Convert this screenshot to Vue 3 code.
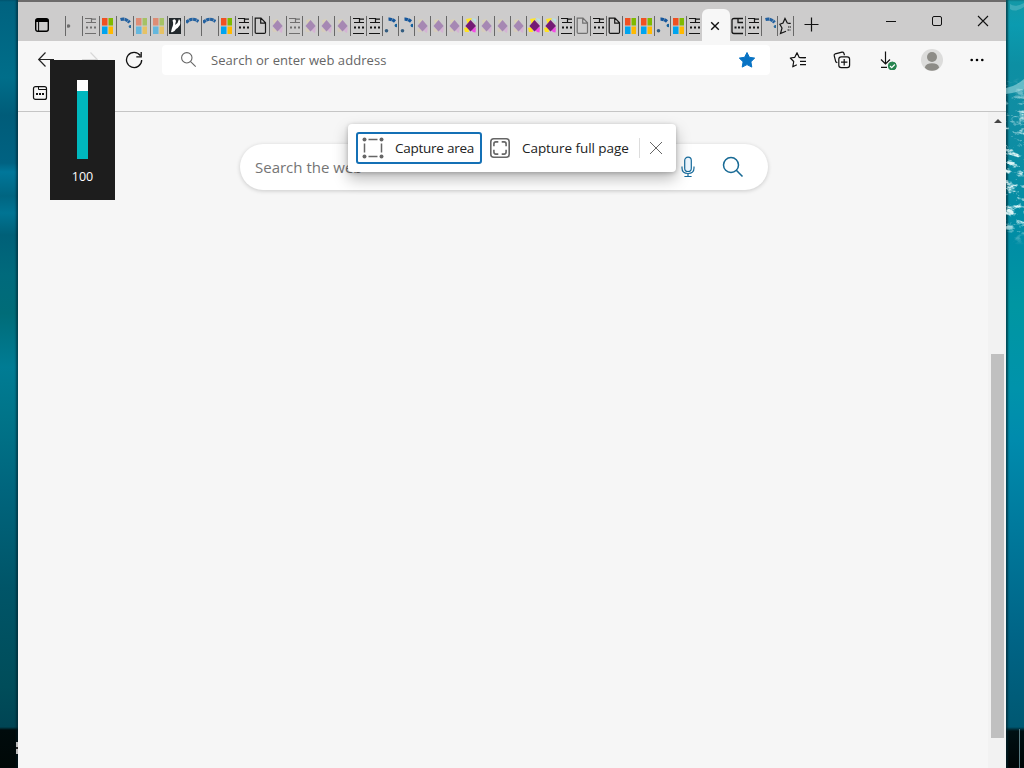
<script setup>
import { ref } from 'vue';

const volume = ref(100);
const searchText = ref('');

// kind + optional sleeping state, in strip order
const leftTabs = [
  ['speck', true], ['news', true], ['ms'], ['arcdot'], ['ms', true], ['ms', true], ['hand'],
  ['arc'], ['arc'], ['ms'], ['news'], ['page'], ['gemPale', true],
  ['news', true], ['gemPale', true], ['gemPale', true], ['gemPale', true], ['news'], ['news'],
  ['dots'], ['dots'], ['gemPale', true], ['gemPale', true], ['gemPale', true], ['gem'],
  ['gemPale', true], ['gemPale', true], ['gemPale', true], ['gem'], ['gem'], ['news'],
  ['page', true], ['news'], ['page'], ['ms'], ['ms'], ['dots'], ['ms'], ['news']
].map(([kind, asleep], i) => ({ kind, asleep: !!asleep, wide: i < 13 }));

const rightTabs = [
  { kind: 'panel', first: true },
  { kind: 'news' },
  { kind: 'arcdot' },
  { kind: 'star' }
];

const icons = {
  speck: '<circle cx="1.5" cy="10" r="1.8" fill="#111"/>',
  news: '<path d="M1 2.5H7.5V6.5H12M8 3.2H12M2 6.5H7M1 17.5H12" fill="none" stroke="#151515" stroke-width="1.2"/><path d="M2 11.5h2M6 11.5h2M10 11.5h2" stroke="#151515" stroke-width="2"/>',
  panel: '<path d="M12 2.5H3Q1 2.5 1 4.5V15.5Q1 17.5 3 17.5H12M7 2.5V6.5H12" fill="none" stroke="#151515" stroke-width="1.3"/><path d="M3.5 11.5h2M7 11.5h2M10.5 11.5h2" stroke="#151515" stroke-width="2"/>',
  ms: '<path d="M1 2H6.5V9.5H1z" fill="#f05022"/><path d="M7.5 2H12V9.5H7.5z" fill="#7fba00"/><path d="M1 10.5H6.5V18H1z" fill="#00a4ef"/><path d="M7.5 10.5H12V18H7.5z" fill="#ffb900"/>',
  arc: '<path d="M0 6.5Q6 .5 12.5 5.5" fill="none" stroke="#2361a0" stroke-width="3.2" stroke-dasharray="3.6 .4"/>',
  arcdot: '<path d="M2.5 3.5Q8 2 11.5 6.5" fill="none" stroke="#2361a0" stroke-width="3.2" stroke-dasharray="3.6 .4"/><circle cx="12.3" cy="10.5" r="1.6" fill="#2b6b9d"/>',
  dots: '<path d="M4.5 3.2Q8 3 11 5.5" fill="none" stroke="#15569b" stroke-width="3.2" stroke-dasharray="3.4 .4"/><circle cx="12.3" cy="9.5" r="1.7" fill="#17629d"/><circle cx="2.5" cy="14.7" r="1.8" fill="#345d80"/>',
  hand: '<path d="M0 2H12V18H0z" fill="#23292d"/><path d="M3.5 4.5Q6 2 7 5L6 9L8.5 7L10 3Q12 5 11 9Q9 12 7 13Q5 17 2 16L3 12Q5 8 3.5 4.5z" fill="#fff"/>',
  page: '<path d="M1.2 2.2H7L11.5 6.8V16.2Q11.5 17.4 10.3 17.4H2.4Q1.2 17.4 1.2 16.2zM6.7 2.2V7.1H11.5" fill="none" stroke="#171717" stroke-width="1.2"/>',
  gem: '<path d="M2 3L8 2L4 9z" fill="#ffe52c"/><path d="M0 12L4 11L5 16L1 16z" fill="#ffe321"/><path d="M7 14L12 11L11.5 16.5L9 16z" fill="#f24be5"/><path d="M8 2L12 3V7z" fill="#b3e4e6"/><path d="M6.5 4L12 10L6.5 15.5L1.4 10z" fill="#741b75"/>',
  gemPale: '<path d="M2 4L7 3L3 9z" fill="#e5d6a2"/><path d="M1 13L4 11L6 16L2 16z" fill="#e0cfae"/><path d="M7 13L12 11L11 17L9 16z" fill="#dc9bdc"/><path d="M6.5 4L11.7 10L6.5 15.5L1.5 10z" fill="#81479c"/>',
  star: '<path d="M11.5 7.4L8.3 7L6 2.4L4 7L.9 8.3L3 12L1.5 17.5L7 15.2" fill="none" stroke="#151515" stroke-width="1.2"/><path d="M9.5 7.5H12M9 11h3M8.5 14h3" stroke="#151515" stroke-width="1.1" stroke-dasharray="1.5 .5"/>'
};
</script>

<template>
  <div class="desktop">
    <div class="edge edge-left"><span class="task-glyph"></span></div>

    <div class="browser">
      <header class="tab-strip">
        <svg class="tab-actions" width="16" height="16" viewBox="0 0 16 16">
          <rect x="1.7" y="1.7" width="12.6" height="12.6" rx="2" fill="none" stroke="#000" stroke-width="1.4" />
          <path d="M2 2H14V5H2z" /><path d="M4.6 5V14" stroke="#000" />
        </svg>
        <div class="tabs">
          <div v-for="(tab, i) in leftTabs" :key="i" class="tab" :class="{ wide: tab.wide, asleep: tab.asleep }">
            <svg width="13" height="20" viewBox="0 0 13 20" v-html="icons[tab.kind]"></svg>
          </div>
        </div>
        <div class="tab-active">
          <svg width="10" height="10" viewBox="0 0 10 10"><path d="M1.2 1.2L8.8 8.8M8.8 1.2L1.2 8.8" stroke="#111" stroke-width="1.4" /></svg>
        </div>
        <div class="tabs tabs-after">
          <div v-for="(tab, i) in rightTabs" :key="i" class="tab" :class="{ first: tab.first }">
            <svg width="13" height="20" viewBox="0 0 13 20" v-html="icons[tab.kind]"></svg>
          </div>
          <div class="tab end"></div>
        </div>
        <svg class="new-tab" width="16" height="16" viewBox="0 0 16 16"><path d="M7.5 .5V14.5M.5 7.5H14.5" stroke="#111" stroke-width="1.2" /></svg>
        <div class="window-buttons">
          <svg width="12" height="12" viewBox="0 0 12 12"><path d="M1 6.5H11" stroke="#111" /></svg>
          <svg width="12" height="12" viewBox="0 0 12 12"><rect x="1.5" y="1.5" width="9" height="9" rx="1.5" fill="none" stroke="#111" /></svg>
          <svg width="12" height="12" viewBox="0 0 12 12"><path d="M1 1L11 11M11 1L1 11" stroke="#111" stroke-width="1.1" /></svg>
        </div>
      </header>

      <div class="toolbar">
        <div class="nav">
          <svg width="18" height="18" viewBox="0 0 18 18"><path d="M17 8.5H2M8.5 1.5L1.7 8.5L8.5 15.5" fill="none" stroke="#222" stroke-width="1.2" /></svg>
          <svg width="18" height="18" viewBox="0 0 18 18"><path d="M1 8.5H16M9.5 1.5L16.3 8.5L9.5 15.5" fill="none" stroke="#d8d8d8" stroke-width="1.2" /></svg>
          <svg width="18" height="18" viewBox="0 0 18 18"><path d="M15.3 4.5A7.6 7.6 0 1 0 16.7 9M16.2 1V5.8H11.3" fill="none" stroke="#111" stroke-width="1.3" /></svg>
        </div>
        <div class="address">
          <svg width="17" height="17" viewBox="0 0 17 17"><circle cx="6.8" cy="6.8" r="5.2" fill="none" stroke="#666" stroke-width="1.1" /><path d="M10.6 10.6L15.7 15.7" stroke="#666" stroke-width="1.1" /></svg>
          <span>Search or enter web address</span>
          <svg class="fav" width="18" height="18" viewBox="0 0 18 18"><path d="M9 1.5L11.4 6.3L16.7 7.1L12.9 10.8L13.8 16.1L9 13.6L4.2 16.1L5.1 10.8L1.3 7.1L6.6 6.3z" fill="#0873c4" stroke="#0873c4" stroke-linejoin="round" /></svg>
        </div>
        <div class="actions">
          <svg width="18" height="18" viewBox="0 0 18 18"><path d="M16.2 6.7L10.2 6.4L8 1.7L5.8 6.3L1.3 7L4.7 10.5L3.8 15.8L7.8 13.8" fill="none" stroke="#111" stroke-width="1.2" stroke-linejoin="round" /><path d="M10.5 6.7H17M11 10.3H17M11 13.7H17" stroke="#111" stroke-width="1.2" /></svg>
          <svg width="18" height="18" viewBox="0 0 18 18"><path d="M4.3 11.8L2.8 10.8L1.2 4.6Q.9 3.2 2.2 2.8L9 1.1Q10.3.8 10.8 2L11.5 4.2" fill="none" stroke="#111" stroke-width="1.2" /><rect x="5.8" y="5.8" width="10.8" height="10.8" rx="2.4" fill="none" stroke="#111" stroke-width="1.2" /><path d="M11.2 8V14.4M8 11.2H14.4" stroke="#111" stroke-width="1.2" /></svg>
          <svg width="20" height="20" viewBox="0 0 20 20"><path d="M8.5 1.5V14M4 9.5L8.5 14L13 9.5M4 17.3H10" fill="none" stroke="#111" stroke-width="1.2" /><circle cx="15.3" cy="16" r="4" fill="#278550" stroke="#278550" /><path d="M13 16L14.7 17.7L17.8 14.5" fill="none" stroke="#fff" stroke-width="1.2" /></svg>
          <svg width="22" height="22" viewBox="0 0 22 22"><circle cx="11" cy="11" r="11" fill="#dcdcdb" /><circle cx="11" cy="8" r="5" fill="#8d8c87" /><path d="M3.8 18.5Q5 14.3 11 14.3T18.2 18.5Q15.5 21.7 11 21.7T3.8 18.5z" fill="#8d8c87" /></svg>
          <svg width="16" height="16" viewBox="0 0 16 16"><circle cx="2.7" cy="8" r="1.3" /><circle cx="8" cy="8" r="1.3" /><circle cx="13.3" cy="8" r="1.3" /></svg>
        </div>
      </div>

      <div class="bookmarks">
        <svg width="16" height="16" viewBox="0 0 16 16"><rect x="1.5" y="1.6" width="13" height="12.8" rx="2" fill="none" stroke="#111" stroke-width="1.2" /><path d="M6.5 2V4.5H14.5" fill="none" stroke="#111" /><path d="M4 9h2M7 9h2M10 9h2" stroke="#111" stroke-width="2" /></svg>
      </div>

      <main class="page">
        <div class="search-box">
          <input v-model="searchText" type="text" placeholder="Search the web" />
          <svg class="mic" width="14" height="22" viewBox="0 0 14 22"><rect x="3.7" y="1.2" width="6.6" height="14.3" rx="3.3" fill="#edf7ff" stroke="#176b9c" stroke-width="1.2" /><path d="M1 10.5V12Q1 17.5 7 17.5T13 12V10.5M7 17.5V20.5M3.4 20.5H10.6" fill="none" stroke="#176b9c" stroke-width="1.2" /></svg>
          <svg class="lens" width="22" height="22" viewBox="0 0 22 22"><circle cx="9" cy="9" r="7.5" fill="none" stroke="#176994" stroke-width="1.5" /><path d="M14.3 14.3L20.5 20.5" stroke="#176994" stroke-width="1.6" /></svg>
        </div>
        <div class="scrollbar">
          <svg width="8" height="4" viewBox="0 0 8 4"><path d="M0 4L4 0L8 4z" fill="#444" /></svg>
          <div class="thumb"></div>
        </div>
      </main>
    </div>

    <div class="edge edge-right">
      <svg width="18" height="768" viewBox="0 0 18 768">
        <defs>
          <filter id="foam" x="0" y="0" width="1" height="1">
            <feTurbulence type="fractalNoise" baseFrequency=".1 .19" numOctaves="4" seed="6" />
            <feColorMatrix values="0 0 0 0 .72  0 0 0 0 .91  0 0 0 0 .92  4 2 0 0 -3.1" />
          </filter>
          <linearGradient id="fade" x2="0" y2="1">
            <stop offset="0" stop-color="#fff" stop-opacity="0" />
            <stop offset=".2" stop-color="#fff" stop-opacity=".8" />
            <stop offset=".5" stop-color="#fff" />
            <stop offset=".85" stop-color="#fff" />
            <stop offset="1" stop-color="#fff" stop-opacity="0" />
          </linearGradient>
          <mask id="surf"><rect y="75" width="18" height="170" fill="url(#fade)" /></mask>
        </defs>
        <path d="M0 88Q10 86 18 79V89Q10 93 0 94z" fill="#9fd8df" opacity=".6" />
        <path d="M4 4Q9 8 18 3V7Q9 13 4 9z" fill="#9fd8df" opacity=".3" />
        <g mask="url(#surf)"><rect width="18" height="245" filter="url(#foam)" /></g>
      </svg>
      <span class="show-desktop"></span>
    </div>

    <div class="capture">
      <button class="capture-button selected">
        <svg width="22" height="22" viewBox="0 0 22 22"><path d="M6.5 2.5H15.5M6.5 19.5H15.5M2.5 6.5V15.5M19.5 6.5V15.5" stroke="#666" stroke-width="1.5" /><g fill="#666"><circle cx="2.5" cy="2.5" r="2" /><circle cx="19.5" cy="2.5" r="2" /><circle cx="2.5" cy="19.5" r="2" /><circle cx="19.5" cy="19.5" r="2" /></g></svg>
        <span>Capture area</span>
      </button>
      <button class="capture-button full">
        <svg width="20" height="20" viewBox="0 0 20 20"><rect x=".8" y=".8" width="18.4" height="18.4" rx="3" fill="#fff" stroke="#666" stroke-width="1.6" /><path d="M3.9 8.3V5.9Q3.9 3.9 5.9 3.9H8.3M11.7 3.9H14.1Q16.1 3.9 16.1 5.9V8.3M16.1 11.7V14.1Q16.1 16.1 14.1 16.1H11.7M8.3 16.1H5.9Q3.9 16.1 3.9 14.1V11.7" fill="none" stroke="#666" stroke-width="1.6" /></svg>
        <span>Capture full page</span>
      </button>
      <span class="divider"></span>
      <svg class="dismiss" width="14" height="14" viewBox="0 0 14 14"><path d="M1 1L13 13M13 1L1 13" stroke="#666" /></svg>
    </div>

    <div class="volume">
      <div class="volume-track"><span></span></div>
      <div class="volume-value">{{ volume }}</div>
    </div>
  </div>
</template>

<style>
body {
  margin: 0;
  overflow: hidden;
}
</style>

<style scoped>
.desktop {
  position: relative;
  display: flex;
  width: 1024px;
  height: 768px;
  overflow: hidden;
  font-family: "Open Sans", "Noto Sans", sans-serif;
  font-size: 13px;
}

svg {
  display: block;
  flex: none;
}

.edge {
  position: relative;
  width: 18px;
  flex: none;
}

.edge-left {
  background: linear-gradient(#00627f 0, #006e8a 78px, #005c79 115px, #006282 163px, #00779a 172px, #006581 196px, #007493 213px, #006078 235px, #006a7c 275px, #006c78 313px, #007c94 367px, #007489 417px, #00657d 490px, #005568 588px, #004d5a 686px, #004554 727px, #000b0c 730px, #000807 768px);
  box-shadow: inset -2px 0 2px rgba(0, 25, 35, .5);
}

.task-glyph {
  position: absolute;
  left: 16px;
  top: 742px;
  width: 2px;
  height: 12px;
  background: linear-gradient(#bbb 0 5px, #222 5px 7px, #bbb 7px);
}

.edge-right {
  background: linear-gradient(#1398a7 0, #0b9bb0 25px, #0d8fa3 65px, #118da3 120px, #008da5 240px, #0096a2 305px, #0093ab 389px, #008bad 440px, #00799c 530px, #006486 640px, #005872 727px, #001013 731px, #000405 768px);
  box-shadow: inset 2px 0 2px rgba(0, 35, 45, .65);
}

.show-desktop {
  position: absolute;
  right: 4px;
  top: 729px;
  width: 1px;
  height: 39px;
  background: #5b7c83;
}

.browser {
  width: 988px;
  flex: none;
  display: flex;
  flex-direction: column;
  background: #f7f7f7;
}

.tab-strip {
  height: 41px;
  box-sizing: border-box;
  border-top: 2px solid #6c6b6b;
  display: flex;
  align-items: flex-start;
  background: #cdcccc;
}

.tab-actions {
  margin: 15px 15px 0 16px;
}

.tabs {
  display: flex;
  margin-top: 14px;
}

.tab {
  width: 16px;
  height: 20px;
  box-sizing: border-box;
  padding-left: 1px;
  border-left: 1px solid #686868;
  overflow: hidden;
}

.tab.wide {
  width: 17px;
}

.tab.asleep svg {
  opacity: .5;
}

.tab.first {
  border-left: 0;
  width: 15px;
}

.tab.end {
  width: 1px;
}

.tab-active {
  width: 28px;
  height: 33px;
  margin-top: 7px;
  display: flex;
  align-items: center;
  justify-content: center;
  background: #f7f7f7;
  border-radius: 6px 6px 0 0;
}

.tab-active svg {
  margin-left: -3px;
}

.new-tab {
  margin: 15px 0 0 9px;
}

.window-buttons {
  display: flex;
  gap: 34px;
  margin: 13px 17px 0 auto;
}

.toolbar {
  height: 38px;
  display: flex;
  align-items: center;
}

.nav {
  display: flex;
  width: 144px;
  gap: 26px;
  padding-left: 19px;
  box-sizing: border-box;
}

.address {
  width: 608px;
  height: 30px;
  margin-top: -1px;
  display: flex;
  align-items: center;
  box-sizing: border-box;
  padding: 0 14px 0 18px;
  background: #fff;
  border-radius: 4px;
  color: #666;
}

.address span {
  margin-left: 14px;
  letter-spacing: .06px;
}

.fav {
  margin-left: auto;
}

.actions {
  display: flex;
  align-items: center;
  gap: 26px;
  margin-left: 19px;
}

/* the avatar sits a little closer to the download button */
.actions svg:nth-child(4) {
  margin-left: -2px;
}

.bookmarks {
  height: 33px;
  box-sizing: border-box;
  padding: 6px 0 0 14px;
  border-bottom: 1px solid #c5c5c5;
}

.page {
  flex: 1;
  display: flex;
  justify-content: space-between;
  background: #f6f6f6;
}

.search-box {
  display: flex;
  align-items: center;
  width: 528px;
  height: 46px;
  margin: 32px 0 0 222px;
  box-sizing: border-box;
  padding: 0 24px 0 15px;
  background: #fff;
  border-radius: 23px;
  box-shadow: 0 1px 4px rgba(0, 0, 0, .18);
}

.search-box input {
  flex: 1;
  border: 0;
  padding: 0;
  outline: 0;
  font: 15px "Open Sans", sans-serif;
  background: transparent;
}

.search-box input::placeholder {
  color: #757575;
}

.lens {
  margin-left: 27px;
}

.scrollbar {
  width: 18px;
  background: #f2f2f2;
  display: flex;
  flex-direction: column;
}

.scrollbar svg {
  margin: 7px 0 0 6px;
}

.thumb {
  width: 13px;
  height: 384px;
  margin: 231px 0 0 3px;
  background: #c0c0c0;
}

.capture {
  position: absolute;
  left: 348px;
  top: 124px;
  width: 328px;
  height: 48px;
  box-sizing: border-box;
  display: flex;
  align-items: center;
  padding-left: 8px;
  background: #fff;
  border-radius: 4px;
  box-shadow: 0 7px 15px rgba(0, 0, 0, .27), 0 1px 4px rgba(0, 0, 0, .22);
}

.capture-button {
  height: 32px;
  display: flex;
  align-items: center;
  box-sizing: border-box;
  padding: 0;
  border: 0;
  background: transparent;
  font: 13.5px "Open Sans", sans-serif;
  color: #222;
  white-space: nowrap;
}

.selected {
  width: 126px;
  padding-left: 4px;
  border: 2px solid #1470b5;
  border-radius: 3px;
}

.selected span {
  margin-left: 11px;
  letter-spacing: -.25px;
}

.full {
  width: 157px;
  padding-left: 8px;
}

.full span {
  margin-left: 12px;
  letter-spacing: -.06px;
}

.divider {
  width: 1px;
  height: 20px;
  background: #ddd;
}

.dismiss {
  margin-left: 9px;
}

.volume {
  position: absolute;
  left: 50px;
  top: 60px;
  width: 65px;
  height: 140px;
  box-sizing: border-box;
  padding-top: 20px;
  display: flex;
  flex-direction: column;
  align-items: center;
  background: #1d1d1d;
}

.volume-track {
  width: 11px;
  height: 79px;
  background: #00b7bd;
}

.volume-track span {
  display: block;
  height: 11px;
  background: #fff;
}

.volume-value {
  margin-top: 8px;
  line-height: 20px;
  font-size: 12.5px;
  color: #fff;
}
</style>
